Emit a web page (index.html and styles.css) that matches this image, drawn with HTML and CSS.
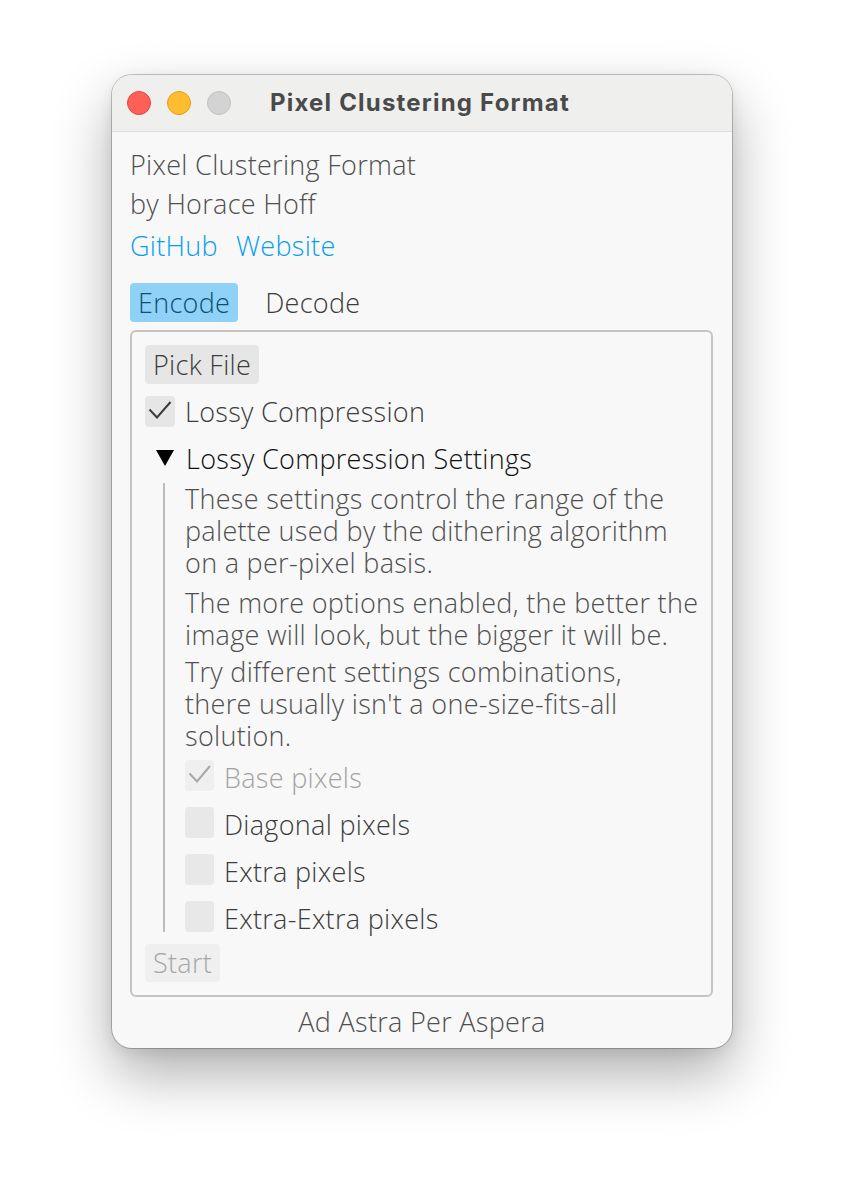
FILE: index.html
```html
<!DOCTYPE html>
<html lang="en">
<head>
<meta charset="utf-8">
<title>Pixel Clustering Format</title>
<link rel="stylesheet" href="styles.css">
</head>
<body>
<div class="stage">
  <div class="window">
    <div class="titlebar">
      <div class="lights">
        <span class="light red"></span>
        <span class="light yellow"></span>
        <span class="light grey"></span>
      </div>
      <div class="title">Pixel Clustering Format</div>
      <div></div>
    </div>
    <div class="content">
      <div class="line l1">Pixel Clustering Format</div>
      <div class="line l2">by Horace Hoff</div>
      <div class="line links"><a class="link">GitHub</a><a class="link">Website</a></div>
      <div class="tabs">
        <span class="tab active">Encode</span>
        <span class="tab">Decode</span>
      </div>
      <div class="group">
        <div class="btn">Pick File</div>
        <div class="check top-check">
          <span class="box"><svg width="30" height="31" viewBox="0 0 30 31"><polyline points="4.5,13.5 12,21.5 25.5,6" fill="none" stroke="#3c3c3c" stroke-width="2"/></svg></span>
          <span class="label">Lossy Compression</span>
        </div>
        <div class="header">
          <span class="tri"><svg width="18" height="17" viewBox="0 0 18 17"><polygon points="0,0 18,0 9,16" fill="#000"/></svg></span>
          <span class="label dark">Lossy Compression Settings</span>
        </div>
        <div class="collapse">
          <div class="rail"></div>
          <div class="cbody">
            <p class="para">These settings control the range of the<br>palette used by the dithering algorithm<br>on a per-pixel basis.</p>
            <p class="para p2">The more options enabled, the better the<br>image will look, but the bigger it will be.</p>
            <p class="para p3">Try different settings combinations,<br>there usually isn't a one-size-fits-all<br>solution.</p>
            <div class="check sub first disabled">
              <span class="box"><svg width="29" height="31" viewBox="0 0 29 31"><polyline points="4.5,13.5 12,21.5 25,6" fill="none" stroke="#a8a8a8" stroke-width="2"/></svg></span>
              <span class="label">Base pixels</span>
            </div>
            <div class="check sub">
              <span class="box"></span>
              <span class="label">Diagonal pixels</span>
            </div>
            <div class="check sub">
              <span class="box"></span>
              <span class="label">Extra pixels</span>
            </div>
            <div class="check sub">
              <span class="box"></span>
              <span class="label">Extra-Extra pixels</span>
            </div>
          </div>
        </div>
        <div class="btn start">Start</div>
      </div>
      <div class="footer">Ad Astra Per Aspera</div>
    </div>
  </div>
</div>
</body>
</html>
```

FILE: styles.css
```css
html, body {
  margin: 0;
  padding: 0;
  background: #ffffff;
}

.stage {
  width: 844px;
  height: 1196px;
  padding: 75px 0 0 112px;
  box-sizing: border-box;
}

.window {
  width: 620px;
  height: 973px;
  box-sizing: border-box;
  border-radius: 20px;
  background: #f8f8f8;
  box-shadow: 0 0 0 1px rgba(0, 0, 0, 0.22), 0 26px 58px rgba(0, 0, 0, 0.32), 0 4px 14px rgba(0, 0, 0, 0.08);
  overflow: hidden;
  display: flex;
  flex-direction: column;
}

.titlebar {
  height: 57px;
  flex: none;
  background: #efefee;
  border-bottom: 1px solid #dcdcdc;
  box-sizing: border-box;
  display: grid;
  grid-template-columns: 1fr auto 1fr;
  align-items: center;
}

.lights {
  display: flex;
  gap: 16px;
  padding-left: 15px;
}

.light {
  width: 24px;
  height: 24px;
  border-radius: 50%;
  box-sizing: border-box;
}

.red { background: #fe5f57; border: 1px solid #e2463f; }
.yellow { background: #febc2e; border: 1px solid #e1a116; }
.grey { background: #d3d3d3; border: 1px solid #c2c2c2; }

.title {
  font-family: "Inter", "Liberation Sans", Arial, sans-serif;
  font-weight: 700;
  font-size: 24px;
  letter-spacing: 1.2px;
  color: #4a4a4a;
  margin-top: -1px;
  margin-left: -4px;
}

.content {
  padding: 16px 18px 0 18px;
  font-family: "Open Sans", "Noto Sans", sans-serif;
  font-weight: 300;
  font-size: 27px;
  letter-spacing: 0.3px;
  color: #4f4f4f;
  display: flex;
  flex-direction: column;
}

.line {
  height: 34px;
  line-height: 34px;
  white-space: nowrap;
}

.l2 { margin-top: 5px; }
.links { margin-top: 8px; display: flex; gap: 18px; }
.link { color: #069ff0; }

.tabs {
  margin-top: 20px;
  display: flex;
  gap: 19px;
  height: 39px;
  line-height: 39px;
}

.tab {
  padding: 0 8px;
  border-radius: 4px;
  color: #3c3c3c;
}

.tab.active {
  background: #90d1f8;
  color: #0f4f72;
}

.group {
  margin-top: 8px;
  width: 583px;
  height: 667px;
  box-sizing: border-box;
  border: 2px solid #c4c4c4;
  border-radius: 6px;
  padding: 13px;
  display: flex;
  flex-direction: column;
  align-items: flex-start;
}

.btn {
  height: 39px;
  line-height: 39px;
  padding: 0 8px;
  background: #e6e6e6;
  border-radius: 4px;
  color: #3c3c3c;
}

.check {
  display: flex;
  align-items: center;
  gap: 10px;
  color: #3c3c3c;
  white-space: nowrap;
}

.top-check {
  margin-top: 12px;
  height: 31px;
}

.box {
  width: 30px;
  height: 31px;
  background: #e6e6e6;
  border-radius: 4px;
  flex: none;
  display: flex;
}

.header {
  margin-top: 16px;
  height: 30px;
  display: flex;
  align-items: center;
  white-space: nowrap;
}

.tri {
  width: 18px;
  height: 17px;
  margin: 0 12px 0 11px;
  display: flex;
}

.dark { color: #111111; }

.collapse {
  margin-top: 10px;
  display: flex;
  align-items: stretch;
}

.rail {
  width: 2px;
  background: #bdbdbd;
  margin-left: 18px;
  margin-right: 20px;
  flex: none;
}

.cbody {
  display: flex;
  flex-direction: column;
  align-items: flex-start;
}

.para {
  margin: 0;
  line-height: 32px;
  white-space: nowrap;
  color: #4f4f4f;
}

.p2 { margin-top: 8px; }
.p3 { margin-top: 5px; }

.sub {
  height: 31px;
  margin-top: 16px;
}

.sub.first { margin-top: 8px; }

.sub .label { padding-top: 3px; }

.sub .box {
  width: 29px;
  height: 31px;
  background: #e8e8e8;
}

.check.disabled { color: #a3a3a3; }
.check.disabled .box { background: #efefef; }

.start {
  margin-top: 12px;
  height: 38px;
  line-height: 38px;
  background: #efefef;
  color: #a6a6a6;
}

.footer {
  margin-top: 8px;
  height: 34px;
  line-height: 34px;
  text-align: center;
  color: #4f4f4f;
}
```
